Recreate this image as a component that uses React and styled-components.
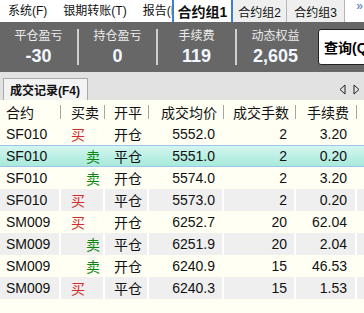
import React from "react";
import styled, { createGlobalStyle } from "styled-components";

const GlobalStyle = createGlobalStyle`
  html, body {
    margin: 0;
    padding: 0;
    overflow: hidden;
    background: #fffff4;
  }
  body {
    font-family: "Liberation Sans", Arial, "Noto Sans CJK SC", sans-serif;
  }
`;

const Page = styled.div`
  width: 364px;
  height: 313px;
  overflow: hidden;
  background-color: #fffff4;
  display: flex;
  flex-direction: column;
`;

const MenuBar = styled.div`
  height: 22px;
  display: flex;
  background-color: #ffffff;
  flex-shrink: 0;
`;
const MenuList = styled.div`
  width: 172px;
  flex-shrink: 0;
  display: flex;
  overflow: hidden;
  white-space: nowrap;
  padding-left: 0;
`;
const MenuItem = styled.div`
  font-size: 12px;
  line-height: 22px;
  color: #111;
  padding: 0 8px;
`;
const GroupTab = styled.div`
  width: ${(p) => p.width}px;
  flex-shrink: 0;
  box-sizing: border-box;
  display: flex;
  align-items: center;
  justify-content: center;
  white-space: nowrap;
  color: #111;
  font-size: ${(p) => (p.active ? "14px" : "12px")};
  font-weight: ${(p) => (p.active ? "bold" : "normal")};
  background-color: ${(p) => (p.active ? "#ffffff" : "#efefef")};
  border-left: ${(p) => (p.active ? "2px solid #3c80d6" : "none")};
  border-right: ${(p) => (p.active ? "2px solid #3c80d6" : "1px solid #b5b5b5")};
`;
const More = styled.div`
  flex: 1;
  font-size: 12px;
  color: #4a6fb0;
  text-align: right;
  padding-right: 1px;
  line-height: 12px;
`;

const StatsBar = styled.div`
  height: 50px;
  flex-shrink: 0;
  display: flex;
  align-items: center;
  background-color: #676767;
  overflow: hidden;
`;
const Stat = styled.div`
  width: 77px;
  flex-shrink: 0;
  display: flex;
  flex-direction: column;
  align-items: center;
  gap: 2px;
`;
const StatLabel = styled.div`
  font-size: 12px;
  line-height: 16px;
  color: #ececec;
`;
const StatValue = styled.div`
  font-size: 18px;
  line-height: 20px;
  font-weight: bold;
  color: #f2f8ff;
`;
const Divider = styled.div`
  width: 2px;
  height: 36px;
  flex-shrink: 0;
  background-color: #cfcfcf;
`;
const QueryButton = styled.div`
  margin-left: 4px;
  width: 64px;
  height: 34px;
  flex-shrink: 0;
  background-color: #ffffff;
  border: 1px solid #222;
  border-radius: 3px;
  display: flex;
  align-items: center;
  padding-left: 5px;
  font-size: 14px;
  font-weight: bold;
  color: #000;
  white-space: nowrap;
`;

const TabStrip = styled.div`
  height: 28px;
  flex-shrink: 0;
  box-sizing: border-box;
  padding: 6px 0 0 3px;
  display: flex;
  align-items: flex-end;
  background-color: #e2e2e2;
`;
const PanelTab = styled.div`
  width: 85px;
  height: 22px;
  box-sizing: border-box;
  border: 1px solid #a9a9a9;
  border-bottom: none;
  background-color: #f3f3f3;
  font-size: 12px;
  font-weight: bold;
  color: #111;
  display: flex;
  align-items: center;
  padding-left: 6px;
`;
const Arrows = styled.div`
  margin-left: auto;
  height: 22px;
  display: flex;
  align-items: center;
  gap: 7px;
  padding-right: 4px;
`;

const Row = styled.div`
  height: ${(p) => (p.header ? 23 : 22)}px;
  flex-shrink: 0;
  box-sizing: border-box;
  display: flex;
  background: ${(p) =>
    p.selected
      ? "linear-gradient(#d3f5f0, #a7eada)"
      : p.shade
      ? "#efefef"
      : "#fffff4"};
  border-top: ${(p) => (p.selected ? "1px solid #9dc4ef" : "none")};
  border-bottom: ${(p) => (p.selected ? "1px solid #9dc4ef" : "none")};
`;
const Cell = styled.div`
  width: ${(p) => p.w}px;
  flex-shrink: 0;
  box-sizing: border-box;
  display: flex;
  align-items: center;
  justify-content: ${(p) => (p.right ? "flex-end" : "flex-start")};
  padding-left: ${(p) => p.pl || 0}px;
  padding-right: ${(p) => p.pr || 0}px;
  border-right: 2px solid ${(p) => (p.shade ? "#ffffff" : "transparent")};
  font-size: 14px;
  color: ${(p) => p.color || "#111"};
  white-space: nowrap;
`;
const HeaderCell = styled(Cell)`
  border-right: none;
  background: linear-gradient(#a5a5a5, #a5a5a5) no-repeat right center / 1px 14px;
`;
const Filler = styled.div`
  flex: 1;
`;

const columns = [
  { key: "code", title: "合约", w: 61, pl: 6 },
  { key: "side", title: "买卖", w: 44, pl: 10 },
  { key: "oc", title: "开平", w: 44, pl: 9 },
  { key: "price", title: "成交均价", w: 75, pr: 7, right: true },
  { key: "qty", title: "成交手数", w: 72, pr: 7, right: true },
  { key: "fee", title: "手续费", w: 61, pr: 8, right: true },
];

const trades = [
  ["SF010", "买", "开仓", "5552.0", "2", "3.20"],
  ["SF010", "卖", "平仓", "5551.0", "2", "0.20"],
  ["SF010", "卖", "开仓", "5574.0", "2", "3.20"],
  ["SF010", "买", "平仓", "5573.0", "2", "0.20"],
  ["SM009", "买", "开仓", "6252.7", "20", "62.04"],
  ["SM009", "卖", "平仓", "6251.9", "20", "2.04"],
  ["SM009", "卖", "开仓", "6240.9", "15", "46.53"],
  ["SM009", "买", "平仓", "6240.3", "15", "1.53"],
];

const stats = [
  ["平仓盈亏", "-30"],
  ["持仓盈亏", "0"],
  ["手续费", "119"],
  ["动态权益", "2,605"],
];

const Triangle = ({ dir }) => (
  <svg width="7" height="11" viewBox="0 0 7 11">
    <path
      d={dir === "left" ? "M6 1 L1 5.5 L6 10 Z" : "M1 1 L6 5.5 L1 10 Z"}
      fill="none"
      stroke="#222"
      strokeWidth="1"
    />
  </svg>
);

const App = () => {
  return (
    <Page>
      <GlobalStyle />
      <MenuBar>
        <MenuList>
          <MenuItem>系统(F)</MenuItem>
          <MenuItem>银期转账(T)</MenuItem>
          <MenuItem>报告(R)</MenuItem>
        </MenuList>
        <GroupTab active width={61}>合约组1</GroupTab>
        <GroupTab width={54}>合约组2</GroupTab>
        <GroupTab width={58}>合约组3</GroupTab>
        <More>»</More>
      </MenuBar>
      <StatsBar>
        {stats.map(([label, value], i) => (
          <React.Fragment key={label}>
            <Stat>
              <StatLabel>{label}</StatLabel>
              <StatValue>{value}</StatValue>
            </Stat>
            {i < stats.length - 1 && <Divider />}
          </React.Fragment>
        ))}
        <QueryButton>查询(Q)</QueryButton>
      </StatsBar>
      <TabStrip>
        <PanelTab>成交记录(F4)</PanelTab>
        <Arrows>
          <Triangle dir="left" />
          <Triangle dir="right" />
        </Arrows>
      </TabStrip>
      <Row header>
        {columns.map((c) => (
          <HeaderCell key={c.key} w={c.w} pl={c.pl} pr={c.pr} right={c.right}>
            {c.title}
          </HeaderCell>
        ))}
      </Row>
      {trades.map((t, i) => {
        const shade = i >= 3 && i % 2 === 1;
        const selected = i === 1;
        return (
          <Row key={i} shade={shade} selected={selected}>
            {columns.map((c, j) => {
              let pl = c.pl;
              let color;
              if (c.key === "side") {
                pl = t[j] === "买" ? 10 : 25;
                color = t[j] === "买" ? "#d42a2a" : "#0b860b";
              }
              return (
                <Cell
                  key={c.key}
                  w={c.w}
                  pl={pl}
                  pr={c.pr}
                  right={c.right}
                  shade={shade}
                  color={color}
                >
                  {t[j]}
                </Cell>
              );
            })}
            <Filler />
          </Row>
        );
      })}
    </Page>
  );
};

export default App;
